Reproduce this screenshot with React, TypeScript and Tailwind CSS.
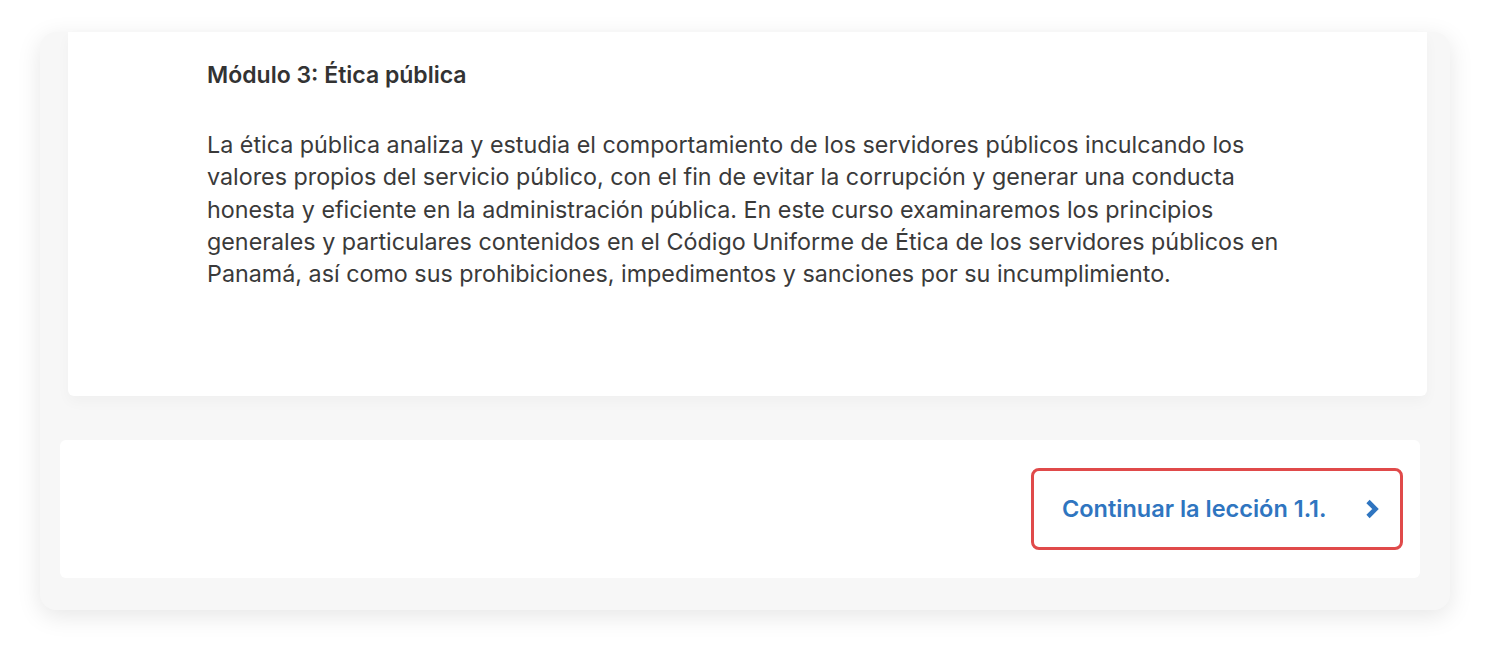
const intro =
  "La ética pública analiza y estudia el comportamiento de los servidores públicos inculcando los valores propios del servicio público, con el fin de evitar la corrupción y generar una conducta honesta y eficiente en la administración pública. En este curso examinaremos los principios generales y particulares contenidos en el Código Uniforme de Ética de los servidores públicos en Panamá, así como sus prohibiciones, impedimentos y sanciones por su incumplimiento.";

function ChevronRight() {
  return (
    <svg className="h-[20px] w-[16px]" viewBox="0 0 16 20" fill="none" stroke="currentColor" strokeWidth={4.6} strokeLinejoin="miter">
      <polyline points="4,2.5 11.5,10 4,17.5" />
    </svg>
  );
}

export default function App() {
  return (
    <div className="min-h-[658px] bg-white px-10 pt-8 pb-12 font-['Inter',sans-serif]">
      <div className="flex h-[578px] w-[1410px] flex-col rounded-2xl bg-[#f7f7f7] shadow-[0_6px_24px_rgba(0,0,0,0.10)]">
        {/* module intro */}
        <div className="ml-7 mr-[23px] h-[364px] rounded-b-md bg-white pl-[139px] pt-[26px] shadow-[0_6px_14px_rgba(0,0,0,0.03)]">
          <h2 className="text-[23px] leading-[34px] font-semibold text-[#333333]">Módulo 3: Ética pública</h2>
          <p className="mt-[37px] max-w-[1090px] text-[23.3px] leading-[32.3px] text-[#3a3a3a]">{intro}</p>
        </div>

        {/* footer nav */}
        <div className="mt-11 ml-5 mr-[30px] flex h-[138px] items-center justify-end rounded-md bg-white pr-[17px]">
          <button className="flex h-[82px] w-[372px] items-center justify-between rounded-lg border-[3px] border-[#e04a4a] pl-[28px] pr-[20px] text-[23.5px] font-semibold text-[#2f75c0]">
            <span>Continuar la lección 1.1.</span>
            <ChevronRight />
          </button>
        </div>
      </div>
    </div>
  );
}
